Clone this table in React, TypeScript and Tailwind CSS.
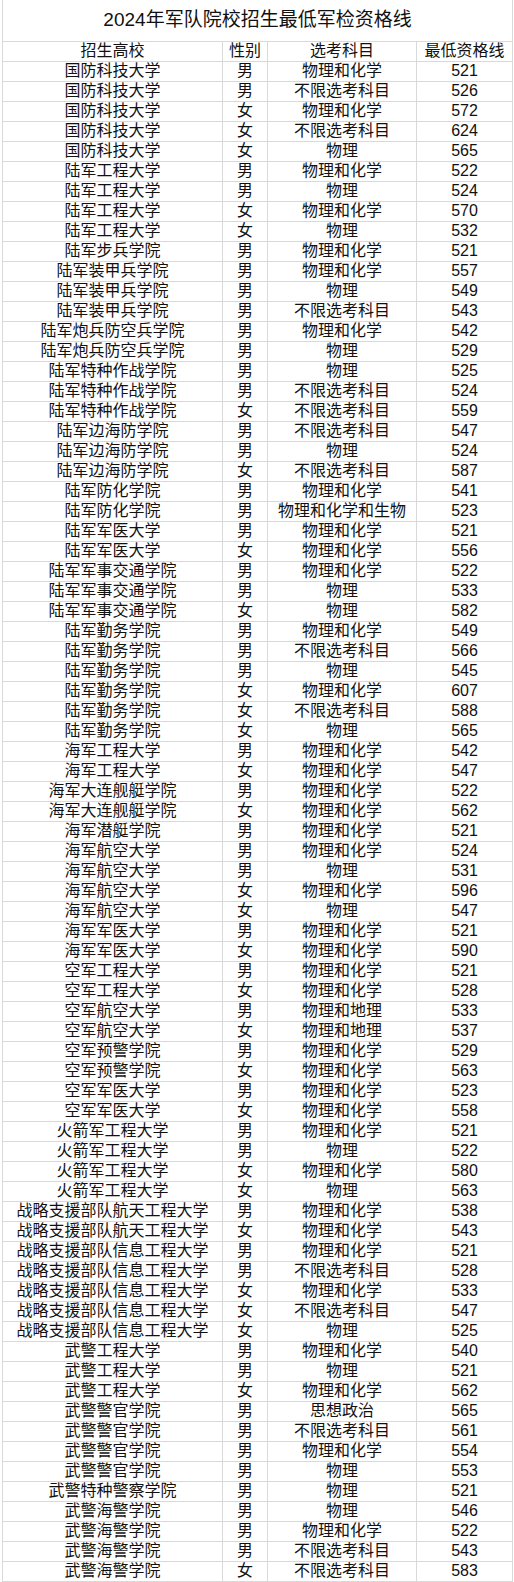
const rows: [string, string, string, string][] = [
  ["国防科技大学", "男", "物理和化学", "521"],
  ["国防科技大学", "男", "不限选考科目", "526"],
  ["国防科技大学", "女", "物理和化学", "572"],
  ["国防科技大学", "女", "不限选考科目", "624"],
  ["国防科技大学", "女", "物理", "565"],
  ["陆军工程大学", "男", "物理和化学", "522"],
  ["陆军工程大学", "男", "物理", "524"],
  ["陆军工程大学", "女", "物理和化学", "570"],
  ["陆军工程大学", "女", "物理", "532"],
  ["陆军步兵学院", "男", "物理和化学", "521"],
  ["陆军装甲兵学院", "男", "物理和化学", "557"],
  ["陆军装甲兵学院", "男", "物理", "549"],
  ["陆军装甲兵学院", "男", "不限选考科目", "543"],
  ["陆军炮兵防空兵学院", "男", "物理和化学", "542"],
  ["陆军炮兵防空兵学院", "男", "物理", "529"],
  ["陆军特种作战学院", "男", "物理", "525"],
  ["陆军特种作战学院", "男", "不限选考科目", "524"],
  ["陆军特种作战学院", "女", "不限选考科目", "559"],
  ["陆军边海防学院", "男", "不限选考科目", "547"],
  ["陆军边海防学院", "男", "物理", "524"],
  ["陆军边海防学院", "女", "不限选考科目", "587"],
  ["陆军防化学院", "男", "物理和化学", "541"],
  ["陆军防化学院", "男", "物理和化学和生物", "523"],
  ["陆军军医大学", "男", "物理和化学", "521"],
  ["陆军军医大学", "女", "物理和化学", "556"],
  ["陆军军事交通学院", "男", "物理和化学", "522"],
  ["陆军军事交通学院", "男", "物理", "533"],
  ["陆军军事交通学院", "女", "物理", "582"],
  ["陆军勤务学院", "男", "物理和化学", "549"],
  ["陆军勤务学院", "男", "不限选考科目", "566"],
  ["陆军勤务学院", "男", "物理", "545"],
  ["陆军勤务学院", "女", "物理和化学", "607"],
  ["陆军勤务学院", "女", "不限选考科目", "588"],
  ["陆军勤务学院", "女", "物理", "565"],
  ["海军工程大学", "男", "物理和化学", "542"],
  ["海军工程大学", "女", "物理和化学", "547"],
  ["海军大连舰艇学院", "男", "物理和化学", "522"],
  ["海军大连舰艇学院", "女", "物理和化学", "562"],
  ["海军潜艇学院", "男", "物理和化学", "521"],
  ["海军航空大学", "男", "物理和化学", "524"],
  ["海军航空大学", "男", "物理", "531"],
  ["海军航空大学", "女", "物理和化学", "596"],
  ["海军航空大学", "女", "物理", "547"],
  ["海军军医大学", "男", "物理和化学", "521"],
  ["海军军医大学", "女", "物理和化学", "590"],
  ["空军工程大学", "男", "物理和化学", "521"],
  ["空军工程大学", "女", "物理和化学", "528"],
  ["空军航空大学", "男", "物理和地理", "533"],
  ["空军航空大学", "女", "物理和地理", "537"],
  ["空军预警学院", "男", "物理和化学", "529"],
  ["空军预警学院", "女", "物理和化学", "563"],
  ["空军军医大学", "男", "物理和化学", "523"],
  ["空军军医大学", "女", "物理和化学", "558"],
  ["火箭军工程大学", "男", "物理和化学", "521"],
  ["火箭军工程大学", "男", "物理", "522"],
  ["火箭军工程大学", "女", "物理和化学", "580"],
  ["火箭军工程大学", "女", "物理", "563"],
  ["战略支援部队航天工程大学", "男", "物理和化学", "538"],
  ["战略支援部队航天工程大学", "女", "物理和化学", "543"],
  ["战略支援部队信息工程大学", "男", "物理和化学", "521"],
  ["战略支援部队信息工程大学", "男", "不限选考科目", "528"],
  ["战略支援部队信息工程大学", "女", "物理和化学", "533"],
  ["战略支援部队信息工程大学", "女", "不限选考科目", "547"],
  ["战略支援部队信息工程大学", "女", "物理", "525"],
  ["武警工程大学", "男", "物理和化学", "540"],
  ["武警工程大学", "男", "物理", "521"],
  ["武警工程大学", "女", "物理和化学", "562"],
  ["武警警官学院", "男", "思想政治", "565"],
  ["武警警官学院", "男", "不限选考科目", "561"],
  ["武警警官学院", "男", "物理和化学", "554"],
  ["武警警官学院", "男", "物理", "553"],
  ["武警特种警察学院", "男", "物理", "521"],
  ["武警海警学院", "男", "物理", "546"],
  ["武警海警学院", "男", "物理和化学", "522"],
  ["武警海警学院", "男", "不限选考科目", "543"],
  ["武警海警学院", "女", "不限选考科目", "583"],
]

const font = { fontFamily: '"Liberation Sans", "Noto Sans CJK SC", sans-serif' }

function Row({ cells }: { cells: [string, string, string, string] }) {
  const cell = "flex h-[20px] items-end justify-center border-r border-b border-[#d9d9d9] pb-[1px] leading-[18px] whitespace-nowrap"
  return (
    <div className="flex">
      <div className={`${cell} w-[221px] border-l`}>{cells[0]}</div>
      <div className={`${cell} w-[45px]`}>{cells[1]}</div>
      <div className={`${cell} w-[149px]`}>{cells[2]}</div>
      <div className={`${cell} w-[96px]`}>{cells[3]}</div>
    </div>
  )
}

export default function App() {
  return (
    <div className="w-[514px] bg-white pl-[2px] text-[16px] text-[#111]" style={font}>
      <div className="flex h-[42px] w-[511px] items-center justify-center border-l border-b border-r border-[#d9d9d9] text-[19px]">
        2024年军队院校招生最低军检资格线
      </div>
      <Row cells={["招生高校", "性别", "选考科目", "最低资格线"]} />
      {rows.map((r, i) => (
        <Row key={i} cells={r} />
      ))}
    </div>
  )
}
